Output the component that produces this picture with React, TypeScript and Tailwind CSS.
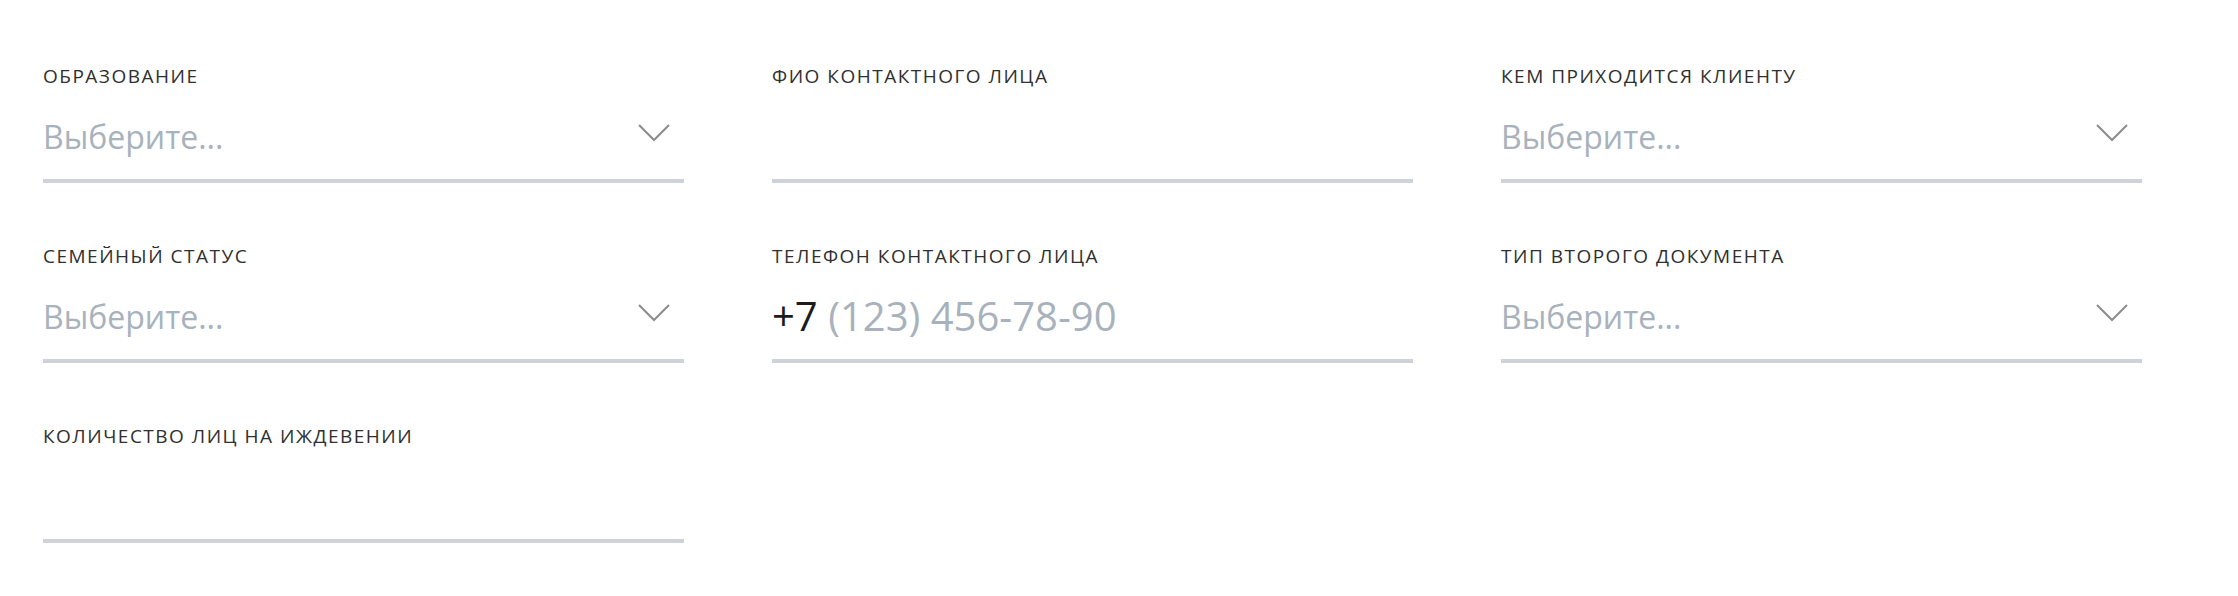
import React from 'react';

type Field = {
  label: string;
  kind: 'select' | 'text' | 'phone';
};

const fields: Field[] = [
  { label: 'Образование', kind: 'select' },
  { label: 'ФИО контактного лица', kind: 'text' },
  { label: 'Кем приходится клиенту', kind: 'select' },
  { label: 'Семейный статус', kind: 'select' },
  { label: 'Телефон контактного лица', kind: 'phone' },
  { label: 'Тип второго документа', kind: 'select' },
  { label: 'Количество лиц на иждевении', kind: 'text' },
];

function Chevron() {
  return (
    <svg width="32" height="18" viewBox="0 0 32 18" fill="none" className="shrink-0">
      <polyline points="1,1 16,16 31,1" stroke="#8c8c8c" strokeWidth="2" />
    </svg>
  );
}

function FormField({ field }: { field: Field }) {
  return (
    <div className="flex flex-col">
      <div className="text-[19px] leading-[24px] uppercase tracking-[1.5px] text-[#2f2f2f]">
        {field.label}
      </div>
      <div className="mt-[29px] flex h-[66px] items-start justify-between border-b-4 border-[#cfd3d9] pr-[14px]">
        {field.kind === 'phone' ? (
          <div className="text-[40px] leading-[38px]">
            <span className="text-[#1c1c1c]">+7 </span>
            <span className="text-[#a8b2bc]">(123) 456-78-90</span>
          </div>
        ) : (
          <div className="text-[32px] leading-[40px] text-[#a8b2bc]">
            {field.kind === 'select' ? 'Выберите...' : ''}
          </div>
        )}
        {field.kind === 'select' && (
          <div className="pt-[7px]">
            <Chevron />
          </div>
        )}
      </div>
    </div>
  );
}

export default function App() {
  return (
    <div className="min-h-screen bg-white pl-[43px] pt-[64px] font-['Open_Sans',sans-serif]">
      <div className="grid grid-cols-[641px_641px_641px] gap-x-[88px] gap-y-[61px]">
        {fields.map((f) => (
          <FormField key={f.label} field={f} />
        ))}
      </div>
    </div>
  );
}
